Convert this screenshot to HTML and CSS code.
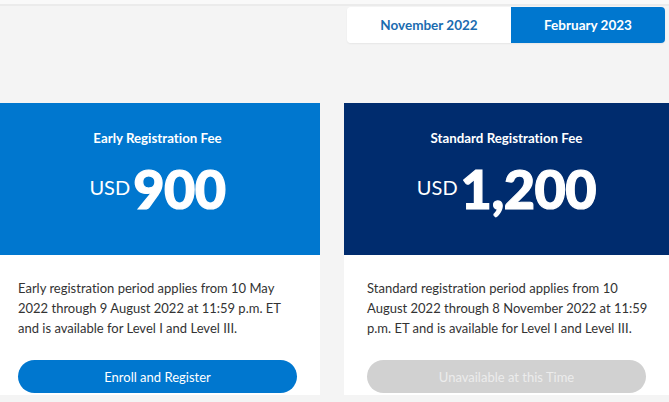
FILE: index.html
```html
<!DOCTYPE html>
<html>
<head>
<meta charset="utf-8">
<link rel="stylesheet" href="styles.css">
</head>
<body>
<div class="page">
  <div class="topband"></div>
  <div class="tabs-row">
    <div class="tabs">
      <div class="tab">November 2022</div>
      <div class="tab active">February 2023</div>
    </div>
  </div>
  <div class="cards">
    <div class="card">
      <div class="card-head early">
        <div class="card-title">Early Registration Fee</div>
        <div class="price"><span class="cur">USD</span><span class="amt">900</span></div>
      </div>
      <div class="card-body">
        <p class="desc">Early registration period applies from 10 May 2022 through 9 August 2022 at 11:59 p.m. ET and is available for Level I and Level III.</p>
        <div class="btn">Enroll and Register</div>
      </div>
    </div>
    <div class="card">
      <div class="card-head standard">
        <div class="card-title">Standard Registration Fee</div>
        <div class="price"><span class="cur">USD</span><span class="amt">1,200</span></div>
      </div>
      <div class="card-body">
        <p class="desc">Standard registration period applies from 10 August 2022 through 8 November 2022 at 11:59 p.m. ET and is available for Level I and Level III.</p>
        <div class="btn disabled">Unavailable at this Time</div>
      </div>
    </div>
  </div>
</div>
</body>
</html>
```

FILE: styles.css
```css
html, body {
  margin: 0;
  padding: 0;
  background: #f4f4f4;
  overflow: hidden;
}
body {
  width: 669px;
  height: 402px;
  font-family: Lato, "Noto Sans", sans-serif;
  font-variant-ligatures: none;
}
.page {
  width: 669px;
  height: 402px;
  overflow: hidden;
}
.topband {
  height: 4px;
  background: #f9f9f9;
  border-bottom: 2px solid #ebebeb;
}
.tabs-row {
  display: flex;
  justify-content: flex-end;
  padding: 1px 4px 0 0;
  height: 96px;
}
.tabs {
  display: flex;
  height: 36px;
  border-radius: 4px;
  overflow: hidden;
  box-shadow: 0 1px 2px rgba(0,0,0,0.06);
}
.tab {
  width: 164px;
  display: flex;
  align-items: center;
  justify-content: center;
  background: #fff;
  color: #1b6cb0;
  font-weight: 700;
  font-size: 13.5px;
}
.tab.active {
  width: 154px;
  background: #0077cf;
  color: #fff;
}
.cards {
  display: flex;
  gap: 24px;
  margin-left: -5px;
}
.card {
  flex: 0 0 325px;
  background: #fff;
  height: 292px;
}
.card-head {
  height: 152px;
  color: #fff;
  display: flex;
  flex-direction: column;
  align-items: center;
  padding-top: 27px;
  box-sizing: border-box;
}
.card-head.early { background: #0077cf; }
.card-head.standard { background: #002c6e; }
.card-title {
  font-weight: 700;
  font-size: 13.3px;
  line-height: 16px;
}
.price {
  display: flex;
  align-items: center;
  margin-top: 11px;
}
.cur {
  font-size: 20px;
  font-weight: 400;
  margin-right: 3px;
  margin-top: -4px;
}
.amt {
  font-size: 54px;
  font-weight: 900;
  line-height: 64px;
  letter-spacing: -0.5px;
  -webkit-text-stroke: 1.2px #fff;
}
.card-body {
  padding: 23px 23px 0;
}
.desc {
  margin: 0 -5px 0 0;
  font-size: 13px;
  line-height: 20px;
  color: #333;
}
.btn {
  margin-top: 22px;
  height: 33px;
  border-radius: 17px;
  background: #0077cf;
  color: #fff;
  font-size: 13px;
  display: flex;
  align-items: center;
  justify-content: center;
}
.btn.disabled {
  background: #d1d1d1;
  color: #ececec;
}
```
